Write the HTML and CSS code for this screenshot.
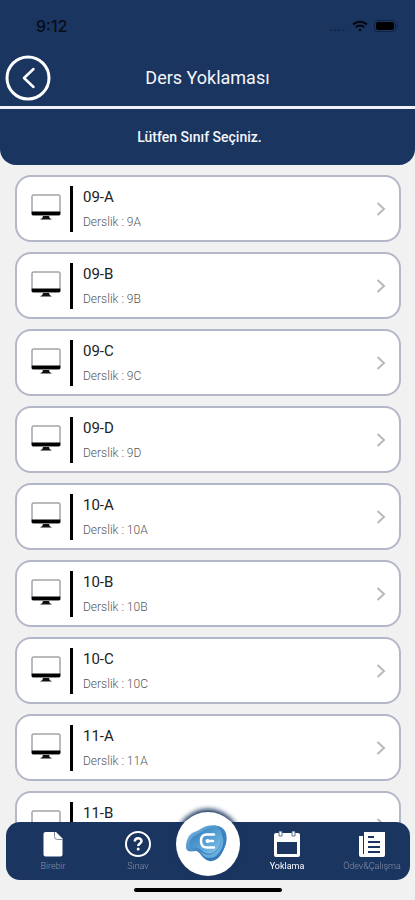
FILE: index.html
```html
<!DOCTYPE html>
<html lang="tr">
<head>
<meta charset="utf-8">
<meta name="viewport" content="width=device-width, initial-scale=1">
<title>Ders Yoklaması</title>
<link rel="stylesheet" href="styles.css">
</head>
<body>
<svg class="defs" aria-hidden="true">
  <symbol id="monitor" viewBox="0 0 30 26">
    <rect x="1" y="1" width="28" height="20" rx="1" fill="#fff" stroke="#777"/>
    <path d="M.7 17.5h28.6V20a1.300 1.300 0 0 1-1.300 1.300H2A1.300 1.300 0 0 1 .7 20z" fill="#000"/>
    <path d="M12 22h6l.8 2.200 1.700.8v.5h-11V25l1.700-.8z" fill="#111"/>
  </symbol>
  <symbol id="chevron" viewBox="0 0 10 16">
    <path d="M1.500 2 8 8l-6.500 6" fill="none" stroke="#b9b9bd" stroke-width="2"/>
  </symbol>
</svg>
<div class="app">
  <header class="header">
    <div class="status">
      <span class="clock">9:12</span>
      <span class="signals">
        <span class="dots">....</span>
        <svg width="16" height="12" viewBox="0 0 16 12" fill="none" stroke="#05080f" stroke-width="2"><path d="M1 4.500a10 10 0 0 1 14 0M3.700 7.400a6 6 0 0 1 8.600 0"/><circle cx="8" cy="10" r="1.200" fill="#05080f" stroke="none"/></svg>
        <svg width="24" height="12" viewBox="0 0 24 12"><rect x=".5" y=".5" width="21" height="11" rx="3" fill="none" stroke="#102344"/><rect x="2" y="2" width="18" height="8" rx="2" fill="#000"/><path d="M23 4v4" stroke="#102344"/></svg>
      </span>
    </div>
    <div class="bar">
      <button class="back" aria-label="Geri"><svg width="46" height="46" viewBox="0 0 46 46" fill="none" stroke="#fff" stroke-width="3"><circle cx="23" cy="23" r="21"/><path d="m28.500 14-9.500 9 9.500 9" stroke-width="2.500" stroke-linecap="round" stroke-linejoin="round"/></svg></button>
      <h1 class="title">Ders Yoklaması</h1>
    </div>
    <p class="prompt">Lütfen Sınıf Seçiniz.</p>
  </header>
  <main class="list">
    <a class="card" href="#"><svg class="pc"><use href="#monitor"/></svg><span class="info"><b>09-A</b><span>Derslik : 9A</span></span><svg class="go"><use href="#chevron"/></svg></a>
    <a class="card" href="#"><svg class="pc"><use href="#monitor"/></svg><span class="info"><b>09-B</b><span>Derslik : 9B</span></span><svg class="go"><use href="#chevron"/></svg></a>
    <a class="card" href="#"><svg class="pc"><use href="#monitor"/></svg><span class="info"><b>09-C</b><span>Derslik : 9C</span></span><svg class="go"><use href="#chevron"/></svg></a>
    <a class="card" href="#"><svg class="pc"><use href="#monitor"/></svg><span class="info"><b>09-D</b><span>Derslik : 9D</span></span><svg class="go"><use href="#chevron"/></svg></a>
    <a class="card" href="#"><svg class="pc"><use href="#monitor"/></svg><span class="info"><b>10-A</b><span>Derslik : 10A</span></span><svg class="go"><use href="#chevron"/></svg></a>
    <a class="card" href="#"><svg class="pc"><use href="#monitor"/></svg><span class="info"><b>10-B</b><span>Derslik : 10B</span></span><svg class="go"><use href="#chevron"/></svg></a>
    <a class="card" href="#"><svg class="pc"><use href="#monitor"/></svg><span class="info"><b>10-C</b><span>Derslik : 10C</span></span><svg class="go"><use href="#chevron"/></svg></a>
    <a class="card" href="#"><svg class="pc"><use href="#monitor"/></svg><span class="info"><b>11-A</b><span>Derslik : 11A</span></span><svg class="go"><use href="#chevron"/></svg></a>
    <a class="card" href="#"><svg class="pc"><use href="#monitor"/></svg><span class="info"><b>11-B</b></span><svg class="go"><use href="#chevron"/></svg></a>
  </main>
  <footer class="footer">
    <nav class="tabs">
      <a class="tab" href="#"><svg width="28" height="28" viewBox="0 0 28 28"><path d="M6.500 2H17l6.500 6.500V24.500a2 2 0 0 1-2 2h-15a2 2 0 0 1-2-2V4a2 2 0 0 1 2-2z" fill="#fff"/><path d="M15.500 2v4.500a3 3 0 0 0 3 3h5" fill="none" stroke="#7c8aa5"/></svg><span>Birebir</span></a>
      <a class="tab" href="#"><svg width="28" height="28" viewBox="0 0 28 28" fill="none" stroke="#fff"><circle cx="14" cy="14" r="12" stroke-width="2"/><path d="M10.800 11.600c0-4.300 6.700-4.300 6.700-.6 0 2.500-3.300 2.300-3.300 5" stroke-width="2.500"/><circle cx="14.200" cy="19" r="1.500" fill="#fff" stroke="none"/></svg><span>Sınav</span></a>
      <a class="home" href="#" aria-label="Ana sayfa">
        <svg width="44" height="40" viewBox="0 0 44 40">
          <defs>
            <linearGradient id="outer" x1="0" y1="0" x2="1" y2="1"><stop offset="0" stop-color="#86bfe6"/><stop offset=".5" stop-color="#3f86c2"/><stop offset="1" stop-color="#2d6fb3"/></linearGradient>
            <linearGradient id="inner" x1="0" y1="0" x2="1" y2="1"><stop offset="0" stop-color="#2f78b8"/><stop offset=".6" stop-color="#5ba5d8"/><stop offset="1" stop-color="#8ec8ea"/></linearGradient>
          </defs>
          <path d="M0 23C0 16 3 10 8 8c5-1 8-5 13-6 8-2 15 0 18 5 4 8 0 18-5 25-4 5-10 7-15 3-4-3-5-7-9-8-3 0-5 1-8 0-1-1-2-2-2-4z" fill="url(#outer)"/>
          <path d="M3 21c1-6 4-9 9-11 4-2 8-6 14-6 6-1 10 2 10 8 0 7-4 14-9 17-4 2-9 0-12-3-4-4-8-1-12-5z" fill="url(#inner)"/>
          <path d="M14 27c4 4 10 5 14 2 5-4 8-10 8-17 3 5 1 13-4 18-5 6-14 5-18-3z" fill="#69addc"/>
          <path d="M28 10.500h-7q-6 0-6 6.500t6 6.500h7M22 17h5" fill="none" stroke="#fff" stroke-width="2.500" stroke-linecap="round"/><circle cx="21.500" cy="17" r="2" fill="#fff"/>
        </svg>
      </a>
      <a class="tab active" href="#"><svg width="28" height="28" viewBox="0 0 28 28"><path fill-rule="evenodd" d="M3 3h3V1.500h3V3h10V1.500h3V3h3a2 2 0 0 1 2 2v20a2 2 0 0 1-2 2H3a2 2 0 0 1-2-2V5a2 2 0 0 1 2-2zm1 9v12h20V12z" fill="#fff"/><path d="M6 2v4h3V2M19 2v4h3V2" fill="none" stroke="#5c7092"/></svg><span>Yoklama</span></a>
      <a class="tab" href="#"><svg width="28" height="28" viewBox="0 0 28 28"><path d="M6 2h21v23a2 2 0 0 1-2 2H3a2 2 0 0 1-2-2V6h4v18h1z" fill="#fff"/><path d="M10 7h6M10 12h12M10 17h12M10 22h12" stroke="#1a3560" stroke-width="2"/></svg><span>Ödev&amp;Çalışma</span></a>
    </nav>
    <div class="indicator"></div>
  </footer>
</div>
</body>
</html>
```
FILE: styles.css
```css
* {
  box-sizing: border-box;
}

body {
  margin: 0;
  background: #f1f1f2;
  font-family: Roboto, "Liberation Sans", sans-serif;
}

a {
  color: inherit;
  text-decoration: none;
}

.defs {
  position: absolute;
  width: 0;
  height: 0;
}

.app {
  height: 100vh;
  display: flex;
  flex-direction: column;
  overflow: hidden;
}

.header {
  flex: none;
  background: #1a3560;
  color: #f5f6fa;
  border-radius: 0 0 16px 16px;
}

.status {
  height: 52px;
  padding: 0 17px 0 36px;
  display: flex;
  align-items: center;
  justify-content: space-between;
  color: #080d18;
}

.clock {
  font: 500 16px/20px Inter, sans-serif;
}

.signals {
  display: flex;
  align-items: center;
  gap: 6px;
}

.dots {
  font-size: 16px;
  line-height: 12px;
  color: #10233f;
}

.bar {
  display: grid;
  grid-template-columns: 46px 1fr 46px;
  align-items: center;
  height: 57px;
  padding: 0 5px 3px;
  border-bottom: 3px solid #f1f1f6;
}

.back {
  width: 46px;
  height: 46px;
  padding: 0;
  border: 0;
  background: none;
}

.back svg {
  display: block;
}

.title {
  margin: 0;
  font-size: 18px;
  font-weight: 400;
  line-height: 24px;
  text-align: center;
}

.prompt {
  margin: 0;
  padding: 18px 16px 18px 0;
  font-size: 14px;
  font-weight: 500;
  line-height: 20px;
  text-align: center;
}

.list {
  flex: 1;
  min-height: 0;
  overflow: hidden;
  padding: 10px 14px 0 15px;
  display: flex;
  flex-direction: column;
  gap: 10px;
}

.card {
  flex: none;
  height: 67px;
  display: flex;
  align-items: center;
  padding: 0 13px 0 14px;
  border: 2px solid #b3b7c7;
  border-radius: 16px;
  background: #fff;
}

.pc {
  width: 30px;
  height: 26px;
  margin: 0 9px 4px 0;
}

.info {
  flex: 1;
  height: 46px;
  padding-left: 10px;
  border-left: 3px solid #000;
  display: flex;
  flex-direction: column;
  gap: 4px;
  font-size: 12px;
  font-weight: 300;
  line-height: 20px;
  color: #555;
}

.info b {
  font-size: 15px;
  font-weight: 400;
  line-height: 22px;
  color: #222;
}

.go {
  width: 10px;
  height: 16px;
}

.footer {
  position: fixed;
  left: 0;
  right: 0;
  bottom: 0;
  padding: 0 5px 8px 6px;
}

.tabs {
  height: 58px;
  display: grid;
  grid-template-columns: 94fr 76fr 64px 94fr 76fr;
  align-items: center;
  background: #1a3560;
  border-radius: 14px;
}

.tab {
  display: flex;
  flex-direction: column;
  align-items: center;
  gap: 2px;
  font-size: 9px;
  font-weight: 300;
  line-height: 12px;
  color: #8b92a5;
}

.active {
  color: #fff;
  font-weight: 400;
}

.home {
  width: 64px;
  height: 64px;
  margin-top: -14px;
  display: flex;
  align-items: center;
  justify-content: center;
  border-radius: 50%;
  background: #fff;
  box-shadow: 0 -3px 5px #1a3560;
}

.indicator {
  width: 148px;
  height: 4px;
  margin: 8px auto 0;
  border-radius: 2px;
  background: #000;
}
```
